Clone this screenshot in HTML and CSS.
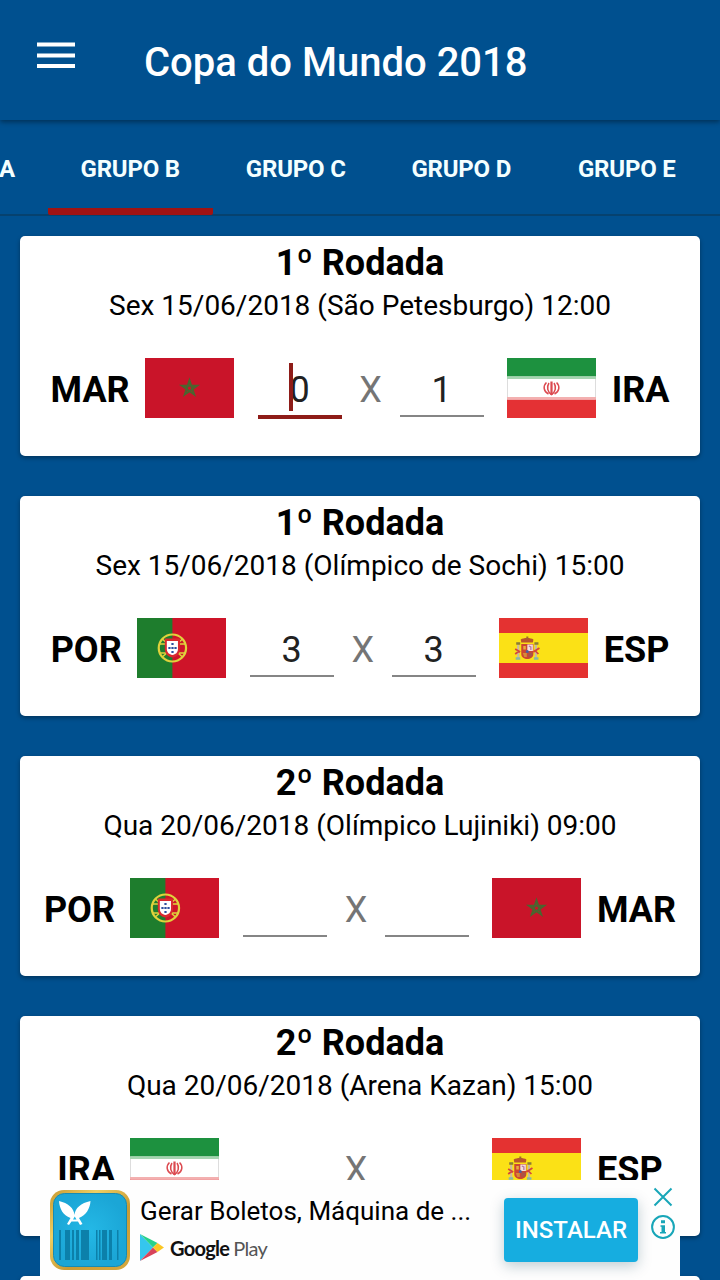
FILE: index.html
```html
<!DOCTYPE html>
<html lang="pt-BR">
<head>
    <meta charset="utf-8">
    <title>Copa do Mundo 2018</title>
    <link rel="stylesheet" href="styles.css">
</head>
<body>

<svg class="defs" width="0" height="0">
    <symbol id="flag-mar" viewBox="0 0 88 60" preserveAspectRatio="none">
        <rect width="88" height="60" fill="#c91429"/>
        <path d="M44 22.500L48.600 36.500L36.600 27.800H51.400L39.400 36.500Z" fill="none" stroke="#49662f" stroke-width="2"/>
    </symbol>
    <symbol id="flag-ira" viewBox="0 0 88 60" preserveAspectRatio="none">
        <rect width="88" height="60" fill="#fff"/>
        <path d="M.5 18V42M87.500 18V42" stroke="#ddd"/>
        <rect width="88" height="18.500" fill="#1d913f"/>
        <rect y="41.500" width="88" height="18.500" fill="#e43134"/>
        <path d="M0 19.700H88" stroke="#a5d5b0" stroke-width="2.400"/>
        <path d="M0 40.300H88" stroke="#f3b0b0" stroke-width="2.400"/>
        <g fill="none" stroke="#dc4a50" stroke-width="1.500">
            <path d="M44 23.500V37" stroke-width="2.200"/>
            <path d="M39 24.500C35.500 28 36 33.500 41 36M49 24.500C52.500 28 52 33.500 47 36"/>
            <path d="M41.500 25C39 29 40 34 44 36.500C48 34 49 29 46.500 25"/>
        </g>
    </symbol>
    <symbol id="flag-por" viewBox="0 0 88 60" preserveAspectRatio="none">
        <rect width="88" height="60" fill="#ce1429"/>
        <rect width="35" height="60" fill="#1e7d2d"/>
        <g fill="none" stroke="#dfd23c" stroke-width="2.200">
            <circle cx="35" cy="30" r="13.500"/>
            <path d="M22 26H48M22 35H48M25 21L45 39M25 39L45 21" stroke-width="1.500"/>
        </g>
        <path d="M27.500 20.500H42.500V31C42.500 36 39 39 35 39.500C31 39 27.500 36 27.500 31Z" fill="#d92a30"/>
        <path d="M29.500 23H40.500V31C40.500 34.500 38 36.500 35 37C32 36.500 29.500 34.500 29.500 31Z" fill="#fff"/>
        <path d="M34 25h2.200v2h-2.200zM31 29h2.200v2h-2.200zM34 29h2.200v2h-2.200zM37 29h2.200v2h-2.200zM34 33h2.200v2h-2.200z" fill="#2d4f9e"/>
    </symbol>
    <symbol id="flag-esp" viewBox="0 0 88 60" preserveAspectRatio="none">
        <rect width="88" height="60" fill="#e43231"/>
        <rect y="15" width="88" height="30" fill="#fbe116"/>
        <path d="M19 27V40M36.500 27V40" stroke="#c9b9a0" stroke-width="2.200"/>
        <path d="M16 31L21 34M16 36L20 33M34 34L40 30M35 32L39 36" stroke="#d4463c" stroke-width="1.700"/>
        <path d="M17 25.500h4M35 25.500h4" stroke="#8b7b35" stroke-width="2.400"/>
        <path d="M16.500 40.500h4.500M34.500 40.500h4.500" stroke="#88b6a5" stroke-width="2.600"/>
        <path d="M22 24.500L21.500 21.500C24 19.500 31.500 19.500 34 21.500L33.500 24.500Z" fill="#b8552c"/>
        <path d="M28 18.500V21" stroke="#a06a2b" stroke-width="2"/>
        <path d="M22 26H34V36C34 39.500 31 41 28 41C25 41 22 39.500 22 36Z" fill="#cc4632"/>
        <path d="M28 26.500H33.500V33H28Z" fill="#f2dfdc"/>
        <path d="M29.500 28L31.500 29V32" fill="none" stroke="#b978a3" stroke-width="1.300"/>
        <path d="M24 28h2.500v3.500h-2.500z" fill="#e8ae3c"/>
        <path d="M23.500 35H27.500V39H25Z" fill="#d68a37"/>
        <path d="M29 34.500H33V38L29 39.500Z" fill="#a95447"/>
        <circle cx="28" cy="33.500" r="1.500" fill="#4861a4"/>
    </symbol>
</svg>

<div class="app">
    <header class="toolbar">
        <svg class="menu" viewBox="0 0 38 26"><path d="M0 2.500H38M0 13.500H38M0 24H38" stroke="#fff" stroke-width="4"/></svg>
        <h1>Copa do Mundo 2018</h1>
    </header>

    <nav class="tabs">
        <a class="tab">GRUPO A</a>
        <a class="tab active">GRUPO B</a>
        <a class="tab">GRUPO C</a>
        <a class="tab">GRUPO D</a>
        <a class="tab">GRUPO E</a>
    </nav>

    <main class="games">
        <section class="card">
            <h2>1º Rodada</h2>
            <p class="date">Sex 15/06/2018 (São Petesburgo) 12:00</p>
            <div class="match">
                <b class="team">MAR</b>
                <svg class="flag"><use href="#flag-mar"/></svg>
                <span class="score focus"><i class="cursor"></i>0</span>
                <span class="x">X</span>
                <span class="score">1</span>
                <svg class="flag"><use href="#flag-ira"/></svg>
                <b class="team">IRA</b>
            </div>
        </section>

        <section class="card">
            <h2>1º Rodada</h2>
            <p class="date">Sex 15/06/2018 (Olímpico de Sochi) 15:00</p>
            <div class="match">
                <b class="team">POR</b>
                <svg class="flag"><use href="#flag-por"/></svg>
                <span class="score">3</span>
                <span class="x">X</span>
                <span class="score">3</span>
                <svg class="flag"><use href="#flag-esp"/></svg>
                <b class="team">ESP</b>
            </div>
        </section>

        <section class="card">
            <h2>2º Rodada</h2>
            <p class="date">Qua 20/06/2018 (Olímpico Lujiniki) 09:00</p>
            <div class="match">
                <b class="team">POR</b>
                <svg class="flag"><use href="#flag-por"/></svg>
                <span class="score"></span>
                <span class="x">X</span>
                <span class="score"></span>
                <svg class="flag"><use href="#flag-mar"/></svg>
                <b class="team">MAR</b>
            </div>
        </section>

        <section class="card">
            <h2>2º Rodada</h2>
            <p class="date">Qua 20/06/2018 (Arena Kazan) 15:00</p>
            <div class="match">
                <b class="team">IRA</b>
                <svg class="flag"><use href="#flag-ira"/></svg>
                <span class="score"></span>
                <span class="x">X</span>
                <span class="score"></span>
                <svg class="flag"><use href="#flag-esp"/></svg>
                <b class="team">ESP</b>
            </div>
        </section>

        <section class="card"></section>
    </main>

    <aside class="ad">
        <svg class="ad-icon" viewBox="0 0 80 80">
            <defs>
                <linearGradient id="gold" x1="0" y1="0" x2="1" y2="1">
                    <stop offset="0" stop-color="#c89a31"/>
                    <stop offset=".3" stop-color="#efcf62"/>
                    <stop offset=".6" stop-color="#c99b35"/>
                    <stop offset="1" stop-color="#d6a83d"/>
                </linearGradient>
                <radialGradient id="sky">
                    <stop offset="0" stop-color="#24b8e6"/>
                    <stop offset="1" stop-color="#1ba6d6"/>
                </radialGradient>
            </defs>
            <rect width="80" height="80" rx="14" fill="url(#gold)"/>
            <rect x="3.500" y="3.500" width="73" height="73" rx="11" fill="url(#sky)" stroke="#168bb3"/>
            <path d="M9 11C18 13 24 18 24.500 25C25 18 31 13 40.500 11C40 19 36 25 29 28L32.500 34L30 35L28 31.500H21.500L19 35L17 34L20.500 28C13 25 9.500 19 9 11Z" fill="#fff"/>
            <path d="M23 29.500L24.700 26.500L26.500 29.500Z" fill="#24b8e6"/>
            <g fill="#0c80aa">
                <path d="M9 40h2v30h-2zM15 40h5v30h-5zM22 40h2v30h-2zM26 40h3v30h-3zM31 40h8v30h-8zM46 40h1.500v30h-1.500zM49 40h1.500v30h-1.500zM52 40h5v30h-5zM59 40h3v30h-3zM67 40h1.500v30h-1.500z"/>
            </g>
        </svg>
        <div class="ad-text">
            <div class="ad-title">Gerar Boletos, Máquina de ...</div>
            <div class="store">
                <svg class="play" viewBox="0 0 24 27">
                    <path d="M0 0V27L13 13.500Z" fill="#35c6ee"/>
                    <path d="M0 0L17.500 9L13 13.500Z" fill="#27d18b"/>
                    <path d="M0 27L17.500 18L13 13.500Z" fill="#d8435a"/>
                    <path d="M17.500 9L24 13.500L17.500 18L13 13.500Z" fill="#fbc624"/>
                </svg>
                <span class="google">Google</span>
                <span class="gplay">Play</span>
            </div>
        </div>
        <div class="install">INSTALAR</div>
        <div class="ad-links">
            <svg width="20" height="20" viewBox="0 0 20 20"><path d="M1.500 1.500L18.500 18.500M18.500 1.500L1.500 18.500" stroke="#18a6b8" stroke-width="2"/></svg>
            <svg width="26" height="26" viewBox="0 0 26 26"><circle cx="13" cy="13" r="10.900" fill="none" stroke="#18a6b8" stroke-width="2"/><path d="M11 6.200h4v3h-4zM10.500 11.200h4.500v6.800h1v1.500h-6v-1.500h1.500v-5.300h-1z" fill="#18a6b8"/></svg>
        </div>
    </aside>
</div>

</body>
</html>
```
FILE: styles.css
```css
* {
    box-sizing: border-box;
}

body {
    margin: 0;
    font-family: Roboto, sans-serif;
    color: #000;
}

h1, h2, p {
    margin: 0;
}

.defs {
    position: absolute;
}

.app {
    position: relative;
    width: 720px;
    height: 1280px;
    overflow: hidden;
    background: #00508f;
}

.toolbar {
    display: flex;
    height: 120px;
    padding-left: 37px;
    box-shadow: 0 2px 5px rgba(0, 0, 0, .4);
}

.menu {
    width: 38px;
    height: 26px;
    margin: 42px 69px 0 0;
}

.toolbar h1 {
    padding-top: 38px;
    font-size: 40px;
    font-weight: 500;
    line-height: 49px;
    color: #fff;
    white-space: nowrap;
}

.tabs {
    display: flex;
    height: 96px;
    margin-left: -118px;
    border-bottom: 2px solid #06426f;
}

.tab {
    flex: 0 0 165.500px;
    height: 95px;
    font-size: 24px;
    font-weight: 700;
    line-height: 99px;
    letter-spacing: -.2px;
    text-align: center;
    color: #f4ffff;
}

.tab.active {
    border-bottom: 7px solid #a01313;
    border-radius: 0 0 2px 2px;
}

.games {
    display: flex;
    flex-direction: column;
    gap: 40px;
    padding: 20px 20px 0;
}

.card {
    flex: none;
    height: 220px;
    border-radius: 5px;
    background: #fff;
    box-shadow: 0 2px 4px rgba(0, 0, 0, .35);
    text-align: center;
}

.card h2 {
    padding-top: 6px;
    font-size: 36px;
    font-weight: 700;
    line-height: 42px;
}

.date {
    font-size: 28px;
    line-height: 34px;
    padding-top: 5px;
}

.match {
    display: flex;
    justify-content: center;
    height: 60px;
    margin-top: 35px;
    line-height: 65px;
    font-size: 36px;
}

.flag {
    width: 89px;
    height: 60px;
    margin: 0 24px 0 15px;
}

.score ~ .flag {
    margin: 0 16px 0 23px;
}

.score {
    position: relative;
    width: 84px;
    height: 59px;
    border-bottom: 2px solid #858585;
    color: #212121;
}

.score.focus {
    height: 61px;
    border-bottom: 4px solid #8e1c18;
}

/* text caret, drawn over the left edge of the digit */
.cursor {
    position: absolute;
    left: 31px;
    top: 5px;
    width: 4px;
    height: 48px;
    background: #8e1c18;
}

.x {
    width: 58px;
    color: #757575;
}

.ad {
    position: absolute;
    left: 40px;
    bottom: 0;
    display: flex;
    width: 640px;
    height: 100px;
    padding: 0 4px 0 10px;
    background: #fefefe;
}

.ad-icon {
    width: 80px;
    height: 80px;
    margin: 10px 10px 0 0;
}

.ad-text {
    width: 364px;
    padding-top: 15px;
}

.ad-title {
    font-size: 26px;
    line-height: 32px;
    white-space: nowrap;
}

.store {
    display: flex;
    align-items: center;
    height: 27px;
    margin-top: 7px;
    font-family: Lato, sans-serif;
    font-size: 20px;
    color: #111;
}

.play {
    width: 24px;
    height: 27px;
    margin-right: 6px;
}

.google {
    margin-right: 4px;
    font-weight: 700;
    letter-spacing: -.7px;
}

.gplay {
    color: #555;
    letter-spacing: -.7px;
}

.install {
    width: 134px;
    height: 64px;
    margin-top: 18px;
    border-radius: 4px;
    background: #16ade0;
    box-shadow: 0 4px 14px rgba(0, 60, 80, .25);
    font-size: 24px;
    font-weight: 500;
    line-height: 65px;
    text-align: center;
    color: #fff;
}

.ad-links {
    display: flex;
    flex-direction: column;
    align-items: center;
    gap: 7px;
    width: 26px;
    margin: 7px 0 0 12px;
}
```
